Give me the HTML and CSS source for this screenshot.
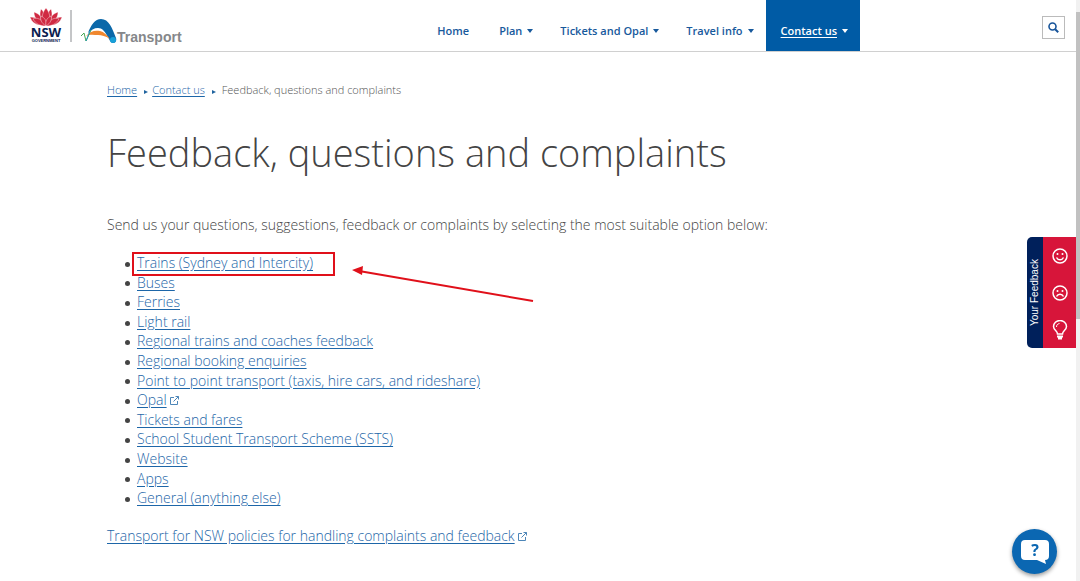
FILE: index.html
```html
<!DOCTYPE html>
<html lang="en">
<head>
  <meta charset="UTF-8">
  <meta name="viewport" content="width=device-width, initial-scale=1.0">
  <title>Feedback, questions and complaints | Transport for NSW</title>
  <link rel="stylesheet" href="styles.css">
</head>
<body>
  <header class="header">
    <a class="brand" href="#" aria-label="Transport for NSW">
      <svg class="logo" width="154" height="38" viewBox="0 0 154 38">
        <!-- waratah -->
        <g transform="translate(0 1)" fill="#d02a42" stroke="#fff" stroke-width=".4">
          <path d="M15 17C7 18 2 15 0 9c6 0 11 3 15 8z"/>
          <path d="M17 17c8 1 13-2 15-8-6 0-11 3-15 8z"/>
          <path d="M15 17C8 15 4 10 4 4c6 2 10 7 11 13z"/>
          <path d="M17 17c7-2 11-7 11-13-6 2-10 7-11 13z"/>
          <path d="M15 17C10 12 9 6 11 1c4 4 6 10 4 16z"/>
          <path d="M17 17c5-5 6-11 4-16-4 4-6 10-4 16z"/>
          <path d="M16 18c-5-5-5-12 0-18 5 6 5 13 0 18z"/>
          <path d="M16 18C12 11 7 9 3 11c3 5 7 7 13 7z"/>
          <path d="M16 18c4-7 9-9 13-7-3 5-7 7-13 7z"/>
          <path d="M16 18c-5-3-6-7-5-10 4 2 6 5 5 10z"/>
          <path d="M16 18c5-3 6-7 5-10-4 2-6 5-5 10z"/>
        </g>
        <text class="logo-nsw" x="16" y="30" text-anchor="middle">NSW</text>
        <text class="logo-gov" x="16" y="35" text-anchor="middle">GOVERNMENT</text>
        <path d="M41 3v32" stroke="#8a8c90"/>
        <!-- transport mark -->
        <path d="M58 26c3-8 7-14 13-14 8 0 11 9 15 19 1 3-1 5-3 5-2 0-3-2-4-4-4-8-7-11-11-11-4 0-7 2-10 5z" fill="#0b68a9"/>
        <path d="M56 29c4-5 9-6 14-5 4 1 7 4 10 8-5-3-8-4-12-4s-8-1-12 1z" fill="#f0872e"/>
        <circle cx="83" cy="33" r="3" fill="#18a0d8"/>
        <path d="M51 29l3-3 2 8 5-11" fill="none" stroke="#45a755"/>
        <path d="M56 34l4-10" fill="none" stroke="#2497bb"/>
        <text class="logo-name" x="87" y="35">Transport</text>
      </svg>
    </a>
    <nav class="nav" aria-label="Main">
      <a class="nav-link" href="#">Home</a>
      <a class="nav-link has-menu" href="#"><span>Plan</span></a>
      <a class="nav-link has-menu" href="#"><span>Tickets and Opal</span></a>
      <a class="nav-link has-menu" href="#"><span>Travel info</span></a>
      <a class="nav-link has-menu nav-active" href="#"><span>Contact us</span></a>
    </nav>
    <button class="search" type="button" aria-label="Search">
      <svg width="11" height="11" viewBox="0 0 11 11" fill="none" stroke="#17549a">
        <circle cx="4.5" cy="4.5" r="3.5" stroke-width="1.6"/>
        <path d="M7.2 7.2l3 3" stroke-width="2"/>
      </svg>
    </button>
  </header>

  <main class="content">
    <nav class="breadcrumb" aria-label="Breadcrumb">
      <a href="#">Home</a>
      <a href="#">Contact us</a>
      <span>Feedback, questions and complaints</span>
    </nav>

    <h1>Feedback, questions and complaints</h1>

    <p>Send us your questions, suggestions, feedback or complaints by selecting the most suitable option below:</p>

    <ul class="options">
      <li class="marked"><a href="#">Trains (Sydney and Intercity)</a>
        <svg class="arrow" width="184" height="36" viewBox="0 0 184 36">
          <path d="M8 4l174 30" stroke="#e0101a" stroke-width="2"/>
          <path d="M1 3l11-4-1 9z" fill="#e0101a"/>
        </svg>
      </li>
      <li><a href="#">Buses</a></li>
      <li><a href="#">Ferries</a></li>
      <li><a href="#">Light rail</a></li>
      <li><a href="#">Regional trains and coaches feedback</a></li>
      <li><a href="#">Regional booking enquiries</a></li>
      <li><a href="#">Point to point transport (taxis, hire cars, and rideshare)</a></li>
      <li><a href="#">Opal</a> <svg class="external" width="9" height="9" viewBox="0 0 9 9"><path d="M4 1.5H.5v7h7V5M3.5 5.5l5-5M5.5.5h3v3"/></svg></li>
      <li><a href="#">Tickets and fares</a></li>
      <li><a href="#">School Student Transport Scheme (SSTS)</a></li>
      <li><a href="#">Website</a></li>
      <li><a href="#">Apps</a></li>
      <li><a href="#">General (anything else)</a></li>
    </ul>

    <p><a href="#">Transport for NSW policies for handling complaints and feedback</a> <svg class="external" width="9" height="9" viewBox="0 0 9 9"><path d="M4 1.5H.5v7h7V5M3.5 5.5l5-5M5.5.5h3v3"/></svg></p>
  </main>

  <aside class="feedback">
    <span class="feedback-label">Your Feedback</span>
    <div class="feedback-buttons">
      <button type="button" aria-label="Happy">
        <svg width="16" height="16" viewBox="0 0 16 16">
          <circle cx="8" cy="8" r="7"/>
          <path d="M4.5 9.5c1.5 3 5.5 3 7 0"/>
          <circle class="dot" cx="5.5" cy="6" r="1"/><circle class="dot" cx="10.5" cy="6" r="1"/>
        </svg>
      </button>
      <button type="button" aria-label="Unhappy">
        <svg width="16" height="16" viewBox="0 0 16 16">
          <circle cx="8" cy="8" r="7"/>
          <path d="M4.5 11.5c1.5-3 5.5-3 7 0"/>
          <circle class="dot" cx="5.5" cy="6" r="1"/><circle class="dot" cx="10.5" cy="6" r="1"/>
        </svg>
      </button>
      <button type="button" aria-label="Idea">
        <svg width="16" height="20" viewBox="0 0 16 20">
          <path d="M5.5 14c0-3-4-4-4-7.500a6.500 6 0 0 1 13 0c0 3.500-4 4.500-4 7.500z"/>
          <path d="M4.5 7c0-2 1-3 3-3.500" stroke-width="1"/>
          <path d="M5 16.500h6M6 18.500h4" stroke-width="2"/>
        </svg>
      </button>
    </div>
  </aside>

  <button class="chat" type="button" aria-label="Help">
    <svg width="30" height="26" viewBox="0 0 30 26">
      <path d="M5 1h20q4 0 4 4v12q0 4-4 4l1 4-9-4H5q-4 0-4-4V5q0-4 4-4z" fill="#fff"/>
      <text x="15" y="17" text-anchor="middle">?</text>
    </svg>
  </button>

  <div class="scrollbar"><div class="scrollbar-thumb"></div></div>
</body>
</html>
```
FILE: styles.css
```css
*,
*::before,
*::after {
  box-sizing: border-box;
}
body {
  margin: 0;
  font-family: "Open Sans", "Noto Sans", sans-serif;
  font-size: 14px;
  font-weight: 300;
  line-height: 1.4;
  color: #444;
  background: #fff;
}
a {
  color: #1d66a8;
  text-underline-offset: 2px;
}
button {
  padding: 0;
  cursor: pointer;
}

/* Header */
.header {
  display: flex;
  align-items: center;
  height: 52px;
  padding: 0 15px 0 30px;
  border-bottom: 1px solid #d0d0d0;
}
.brand,
.brand svg {
  display: block;
}
.logo-nsw {
  font: bold 13px "Open Sans", sans-serif;
  fill: #0a2050;
}
.logo-gov {
  font: bold 4px "Liberation Sans", sans-serif;
  fill: #0a2050;
}
.logo-name {
  font: bold 14px "Liberation Sans", sans-serif;
  fill: #85878a;
}
.nav {
  display: flex;
  align-self: stretch;
  margin-left: auto;
  margin-right: 182px;
}
.nav-link {
  display: flex;
  align-items: center;
  padding: 10px 15px 0;
  font-size: 11px;
  font-weight: 600;
  color: #17599c;
  text-decoration: none;
}
.has-menu {
  padding-right: 12px;
}
.has-menu::after {
  content: "";
  margin-left: 5px;
  border: 3px solid transparent;
  border-top: 4px solid currentColor;
  border-bottom: 0;
}
.nav-active {
  background: #005ba5;
  color: #fff;
}
.nav-active span {
  text-decoration: underline;
}
.search {
  display: flex;
  align-items: center;
  justify-content: center;
  width: 23px;
  height: 23px;
  margin-top: 3px;
  border: 1px solid #bbb;
  background: #fff;
}

/* Content */
.content {
  padding: 30px 107px 0;
}
.breadcrumb {
  display: flex;
  font-size: 11px;
  color: #555;
}
.breadcrumb a::after {
  content: "";
  display: inline-block;
  margin: 0 4px 0 7px;
  border: 2px solid transparent;
  border-left: 4px solid #20649f;
  border-right: 0;
}
.breadcrumb span {
  margin-left: 2px;
}
h1 {
  margin: 28px 0 36px;
  font-size: 38px;
  font-weight: 300;
  line-height: 54px;
}
p {
  margin: 0;
}
.options {
  margin: 18px 0;
  padding-left: 30px;
  list-style: none;
}
.options li::before {
  content: "";
  display: inline-block;
  width: 5px;
  height: 5px;
  margin-left: -12px;
  margin-right: 7px;
  border-radius: 50%;
  background: #444;
  vertical-align: middle;
}
.marked {
  position: relative;
}
.marked::after {
  content: "";
  position: absolute;
  top: -1px;
  left: -5px;
  width: 203px;
  height: 24px;
  border: 2px solid #e0101a;
}
.arrow {
  position: absolute;
  top: 14px;
  left: 214px;
  overflow: visible;
}
.external {
  fill: none;
  stroke: #4d86b8;
}

/* Feedback tab */
.feedback {
  position: fixed;
  top: 237px;
  right: 4px;
  display: flex;
  height: 111px;
  border-radius: 5px 0 0 5px;
  overflow: hidden;
}
.feedback-label {
  width: 16px;
  background: #00205b;
  color: #fff;
  font: 10px/16px "Liberation Sans", sans-serif;
  text-align: center;
  writing-mode: vertical-rl;
  transform: rotate(180deg);
}
.feedback-buttons {
  display: flex;
  flex-direction: column;
  width: 33px;
  background: #d7153a;
}
.feedback-buttons button {
  display: flex;
  flex: 1;
  align-items: center;
  justify-content: center;
  border: 0;
  background: none;
}
.feedback-buttons svg {
  fill: none;
  stroke: #fff;
  stroke-width: 1.5;
}
.feedback-buttons .dot {
  fill: #fff;
  stroke: none;
}

/* Chat button */
.chat {
  position: fixed;
  right: 23px;
  bottom: 7px;
  display: flex;
  align-items: center;
  justify-content: center;
  width: 45px;
  height: 45px;
  border: 0;
  border-radius: 50%;
  background: #0b67b2;
  box-shadow: 0 2px 4px rgba(0,0,0,0.4);
}
.chat text {
  font: bold 16px "Open Sans", sans-serif;
  fill: #0b67b2;
}

/* Page scrollbar */
.scrollbar {
  position: fixed;
  top: 0;
  right: 0;
  bottom: 0;
  width: 4px;
  padding-top: 12px;
  background: #f1f1f1;
}
.scrollbar-thumb {
  height: 54%;
  background: #c1c1c1;
}
```
